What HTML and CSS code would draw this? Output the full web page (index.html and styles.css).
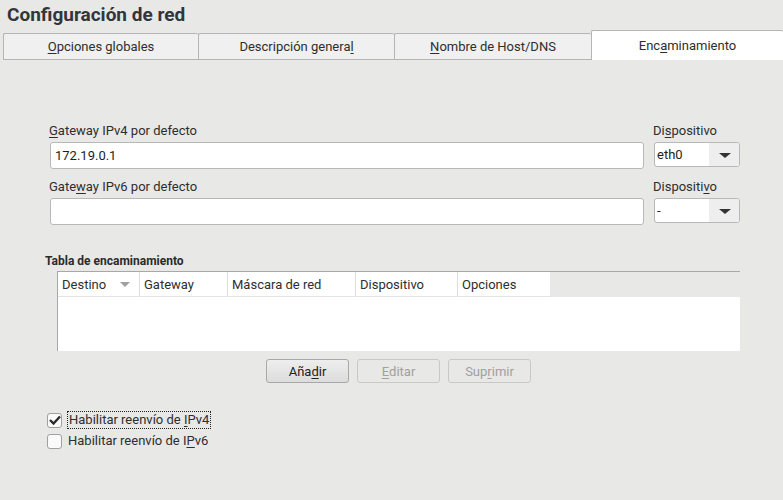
FILE: index.html
```html
<!DOCTYPE html>
<html lang="es">
<head>
<meta charset="utf-8">
<link rel="stylesheet" href="styles.css">
</head>
<body>
<div class="app">
  <h1 class="title">Configuración de red</h1>
  <div class="tabs">
    <div class="tab t1"><u>O</u>pciones globales</div>
    <div class="tab t2">Descripción genera<u>l</u></div>
    <div class="tab t3"><u>N</u>ombre de Host/DNS</div>
    <div class="tab active">Enc<u>a</u>minamiento</div>
  </div>
  <div class="content">
    <div class="gw-row">
      <div class="gw-main">
        <div class="label"><u>G</u>ateway IPv4 por defecto</div>
        <div class="input">172.19.0.1</div>
      </div>
      <div class="gw-dev">
        <div class="label">Di<u>s</u>positivo</div>
        <div class="combo"><span class="cv">eth0</span><span class="arrow"></span></div>
      </div>
    </div>
    <div class="gw-row second">
      <div class="gw-main">
        <div class="label">Gate<u>w</u>ay IPv6 por defecto</div>
        <div class="input"></div>
      </div>
      <div class="gw-dev">
        <div class="label">Dispositi<u>v</u>o</div>
        <div class="combo"><span class="cv">-</span><span class="arrow"></span></div>
      </div>
    </div>
    <div class="table-title">Tabla de encaminamiento</div>
    <div class="table">
      <div class="thead">
        <div class="th c1">Destino <span class="sort"></span></div>
        <div class="th c2">Gateway</div>
        <div class="th c3">Máscara de red</div>
        <div class="th c4">Dispositivo</div>
        <div class="th c5">Opciones</div>
        <div class="th-fill"></div>
      </div>
      <div class="tbody"></div>
    </div>
    <div class="buttons">
      <div class="btn primary">Aña<u>d</u>ir</div>
      <div class="btn disabled"><u>E</u>ditar</div>
      <div class="btn disabled">Sup<u>r</u>imir</div>
    </div>
    <div class="checks">
      <div class="check"><span class="box checked"><svg width="12" height="10" viewBox="0 0 12 10"><path d="M1 5 L4.5 8.5 L11 1.5" fill="none" stroke="#2b2b2b" stroke-width="2.4"/></svg></span><span class="cl focus">Habilitar reenvío de <u>I</u>Pv4</span></div>
      <div class="check"><span class="box"></span><span class="cl">Habilitar reenvío de I<u>P</u>v6</span></div>
    </div>
  </div>
</div>
</body>
</html>
```

FILE: styles.css
```css
* { box-sizing: border-box; }
html, body { margin: 0; padding: 0; }
body {
  width: 783px;
  height: 500px;
  background: #e8e8e7;
  font-family: Roboto, "Noto Sans", sans-serif;
  font-size: 13px;
  color: #2e2e2e;
  overflow: hidden;
}
u { text-decoration: underline; text-underline-offset: 2px; }
.app { display: flex; flex-direction: column; }
.title {
  margin: 0;
  padding: 3px 0 0 7px;
  height: 30px;
  font-size: 19px;
  font-weight: bold;
  color: #31363b;
}
.tabs {
  display: flex;
  align-items: flex-end;
  height: 30px;
  padding-left: 3px;
}
.tab {
  height: 27px;
  border: 1px solid #b5b5b5;
  border-right: none;
  background: #f0f0f0;
  display: flex;
  align-items: center;
  justify-content: center;
  color: #2e2e2e;
  border-radius: 2px 2px 0 0;
}
.t1 { width: 195px; }
.t2 { width: 196px; }
.t3 { width: 197px; }
.tab.active {
  flex: 1;
  height: 30px;
  background: #ffffff;
  border-bottom: none;
  align-items: flex-start;
  padding-top: 7px;
}
.content {
  padding: 0 0 0 45px;
}
.gw-row {
  display: flex;
  margin-top: 62px;
  gap: 10px;
  padding-left: 4px;
}
.gw-row.second { margin-top: 9px; }
.gw-main { width: 595px; }
.gw-dev { width: 86px; }
.label { height: 17px; line-height: 17px; margin-bottom: 3px; }
.input {
  margin-left: 1px;
  height: 27px;
  background: #fff;
  border: 1px solid #b8b8b8;
  border-radius: 3px;
  padding: 4px 4px;
  line-height: 17px;
  color: #1e1e1e;
}
.gw-dev .label { margin-left: -1px; }
.combo {
  margin-top: 1px;
  width: 86px;
  height: 25px;
  background: #fff;
  border: 1px solid #b8b8b8;
  border-radius: 3px;
  display: flex;
  overflow: hidden;
}
.cv { flex: 1; padding: 3px 2px; line-height: 17px; color: #1e1e1e; }
.arrow {
  width: 30px;
  background: #eeeeee;
  position: relative;
}
.arrow::after {
  content: "";
  position: absolute;
  left: 10px;
  top: 10px;
  border-left: 6px solid transparent;
  border-right: 6px solid transparent;
  border-top: 5px solid #333;
}
.table-title {
  margin-top: 29px;
  font-weight: bold;
  font-size: 12px;
  height: 15px;
  line-height: 15px;
  color: #2b2b2b;
}
.table {
  margin: 2px 0 0 12px;
  width: 683px;
  border-top: 1px solid #a8a8a8;
  border-left: 1px solid #a8a8a8;
}
.thead {
  display: flex;
  height: 25px;
}
.th {
  background: #fff;
  border-right: 1px solid #dcdcdc;
  border-bottom: 1px solid #e4e4e4;
  padding: 4px 4px 0 4px;
  line-height: 17px;
  color: #2e2e2e;
}
.c1 { width: 82px; display: flex; gap: 14px; }
.c2 { width: 88px; }
.c3 { width: 128px; }
.c4 { width: 102px; }
.c5 { width: 92px; border-right: none; }
.th-fill { flex: 1; }
.sort {
  display: inline-block;
  margin-top: 6px;
  width: 0; height: 0;
  border-left: 5px solid transparent;
  border-right: 5px solid transparent;
  border-top: 5px solid #a0a0a0;
}
.tbody {
  height: 54px;
  background: #fff;
}
.buttons {
  display: flex;
  gap: 8px;
  margin: 8px 0 0 221px;
}
.btn {
  width: 83px;
  height: 24px;
  border: 1px solid #a8a8a8;
  border-radius: 3px;
  display: flex;
  align-items: center;
  justify-content: center;
  background: linear-gradient(#eeeeee, #dcdcdc);
  color: #222;
}
.btn.disabled {
  background: #e8e8e7;
  border-color: #c8c8c8;
  color: #a0a0a0;
}
.checks {
  margin-top: 28px;
  padding-left: 2px;
  display: flex;
  flex-direction: column;
  gap: 3px;
}
.check { display: flex; align-items: center; gap: 5px; height: 18px; }
.box {
  width: 15px;
  height: 15px;
  border: 1px solid #a0a0a0;
  border-radius: 3px;
  background: #fafafa;
  display: flex;
  align-items: center;
  justify-content: center;
}
.cl { padding: 0 1px; line-height: 16px; }
.cl.focus { border: 1px dotted #222; }
```
